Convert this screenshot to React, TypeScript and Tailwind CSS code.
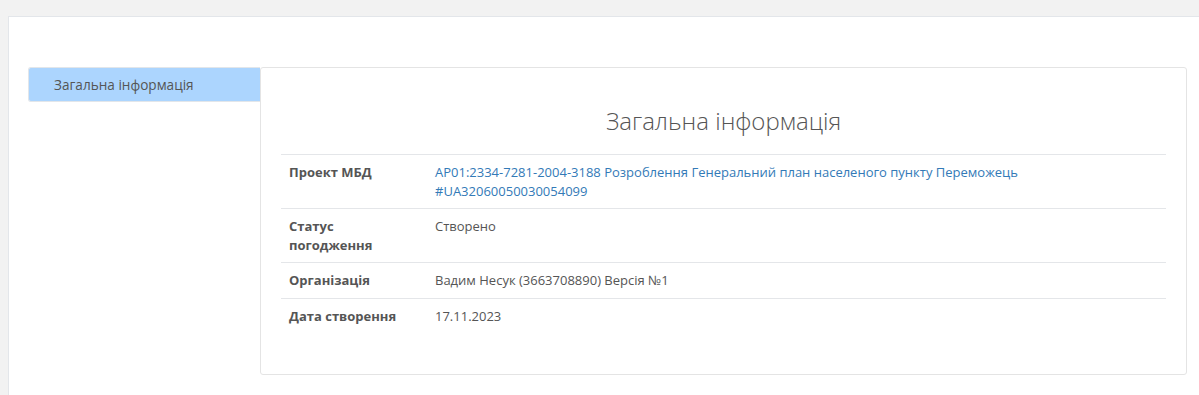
const rows: { label: string; value: string; link?: boolean }[] = [
  {
    label: "Проект МБД",
    value:
      "AP01:2334-7281-2004-3188 Розроблення Генеральний план населеного пункту Переможець #UA32060050030054099",
    link: true,
  },
  { label: "Статус погодження", value: "Створено" },
  { label: "Організація", value: "Вадим Несук (3663708890) Версія №1" },
  { label: "Дата створення", value: "17.11.2023" },
];

export default function App() {
  return (
    <div
      className="min-h-[395px] bg-[#f2f2f2] pt-4 pl-2 text-[13px] leading-[1.42857] text-[#555]"
      style={{ fontFamily: '"Open Sans", "Noto Sans", sans-serif' }}
    >
      <div className="min-h-[379px] border-t border-l border-[#e3e6ea] bg-white pl-[19px] pt-[50px]">
        <div className="flex items-start">
          <div className="w-[232px] shrink-0">
            <div className="h-[35px] rounded-l-[3px] border border-r-0 border-[#e2e6ea] bg-[#acd5fe] pl-[25px] text-[13.6px] leading-[33px] text-[#555]">
              Загальна інформація
            </div>
          </div>
          <div className="w-[927px] min-h-[308px] rounded-[3px] border border-[#e4e4e4] bg-white px-5 pt-[36px] pb-10">
            <h3 className="mb-[16px] text-center text-[24px] font-light leading-[34px] text-[#555]">
              Загальна інформація
            </h3>
            <table className="w-full border-collapse">
              <tbody>
                {rows.map((r) => (
                  <tr key={r.label} className="border-t border-[#e4e6e9]">
                    <td className="w-[146px] px-2 pt-2 pb-[8px] align-top font-bold text-[#555]">
                      {r.label}
                    </td>
                    <td
                      className={
                        r.link
                          ? "px-2 pt-2 pb-[8px] align-top text-[#337ab7]"
                          : "px-2 pt-2 pb-[8px] align-top text-[#555]"
                      }
                    >
                      {r.value}
                    </td>
                  </tr>
                ))}
              </tbody>
            </table>
          </div>
        </div>
      </div>
    </div>
  );
}
